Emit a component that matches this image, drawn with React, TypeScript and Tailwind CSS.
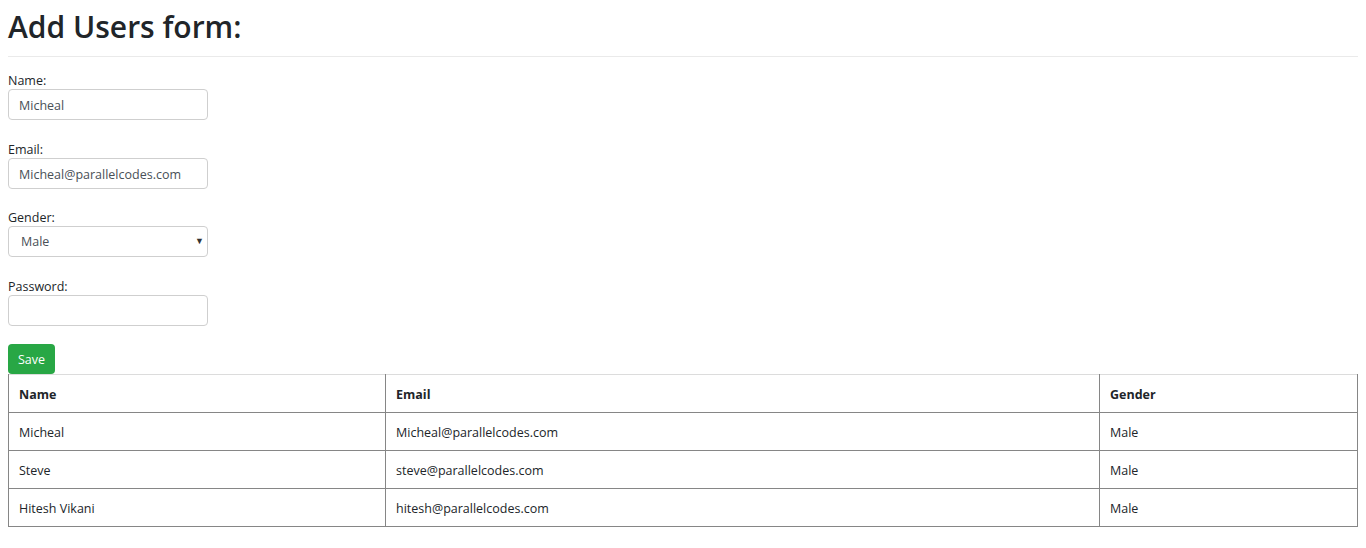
import { useState } from "react";

type User = { name: string; email: string; gender: string };

const USERS: User[] = [
  { name: "Micheal", email: "Micheal@parallelcodes.com", gender: "Male" },
  { name: "Steve", email: "steve@parallelcodes.com", gender: "Male" },
  { name: "Hitesh Vikani", email: "hitesh@parallelcodes.com", gender: "Male" },
];

const font = "font-['Open_Sans','Noto_Sans',sans-serif]";

export default function App() {
  const [name, setName] = useState("Micheal");
  const [email, setEmail] = useState("Micheal@parallelcodes.com");
  const [gender, setGender] = useState("Male");
  const [password, setPassword] = useState("");

  const inputCls =
    "block h-[31px] w-[200px] rounded-[4px] border border-[#cfcfcf] bg-white px-[10px] pt-[2px] text-[12.5px] text-[#495057] outline-none";
  const labelCls = "block pt-[2px] text-[12.5px] leading-[16px]";

  return (
    <div className={`${font} min-h-[548px] bg-white px-2 text-[#212529]`}>
      <h1 className="pt-[6px] text-[30px] font-semibold leading-[42px] text-[#212529]">
        Add Users form:
      </h1>
      <hr className="mt-[8px] border-t border-[#eaeaea]" />

      <form className="mt-[14px]" onSubmit={(e) => e.preventDefault()}>
        {/* Name */}
        <label className={labelCls}>Name:</label>
        <input className={inputCls} value={name} onChange={(e) => setName(e.target.value)} />

        {/* Email */}
        <label className={`${labelCls} mt-[20px]`}>Email:</label>
        <input className={inputCls} value={email} onChange={(e) => setEmail(e.target.value)} />

        {/* Gender */}
        <label className={`${labelCls} mt-[19px]`}>Gender:</label>
        <div className="relative w-[200px]">
          <select
            className={`${inputCls} appearance-none pl-[12px]`}
            value={gender}
            onChange={(e) => setGender(e.target.value)}
          >
            <option>Male</option>
            <option>Female</option>
          </select>
          <span className="pointer-events-none absolute right-[4px] top-[8px] text-[9px] text-[#333]">▼</span>
        </div>

        {/* Password */}
        <label className={`${labelCls} mt-[20px]`}>Password:</label>
        <input
          type="password"
          className={inputCls}
          value={password}
          onChange={(e) => setPassword(e.target.value)}
        />

        <button
          type="submit"
          className="mt-[18px] block h-[30px] w-[47px] rounded-[4px] bg-[#28a745] pt-[2px] text-[12.5px] text-white"
        >
          Save
        </button>
      </form>

      <table className="w-[1350px] border-collapse text-[12.5px]">
        <thead>
          <tr className="h-[38px] border-t border-t-[#dcdcdc]">
            <th className="w-[377px] border-x border-b border-[#868686] px-[10px] pt-[3px] text-left font-bold">Name</th>
            <th className="w-[714px] border-x border-b border-[#868686] px-[10px] pt-[3px] text-left font-bold">Email</th>
            <th className="border-x border-b border-[#868686] px-[10px] pt-[3px] text-left font-bold">Gender</th>
          </tr>
        </thead>
        <tbody>
          {USERS.map((u) => (
            <tr key={u.email} className="h-[38px]">
              <td className="border border-[#868686] px-[10px] pt-[3px]">{u.name}</td>
              <td className="border border-[#868686] px-[10px] pt-[3px]">{u.email}</td>
              <td className="border border-[#868686] px-[10px] pt-[3px]">{u.gender}</td>
            </tr>
          ))}
        </tbody>
      </table>
    </div>
  );
}
